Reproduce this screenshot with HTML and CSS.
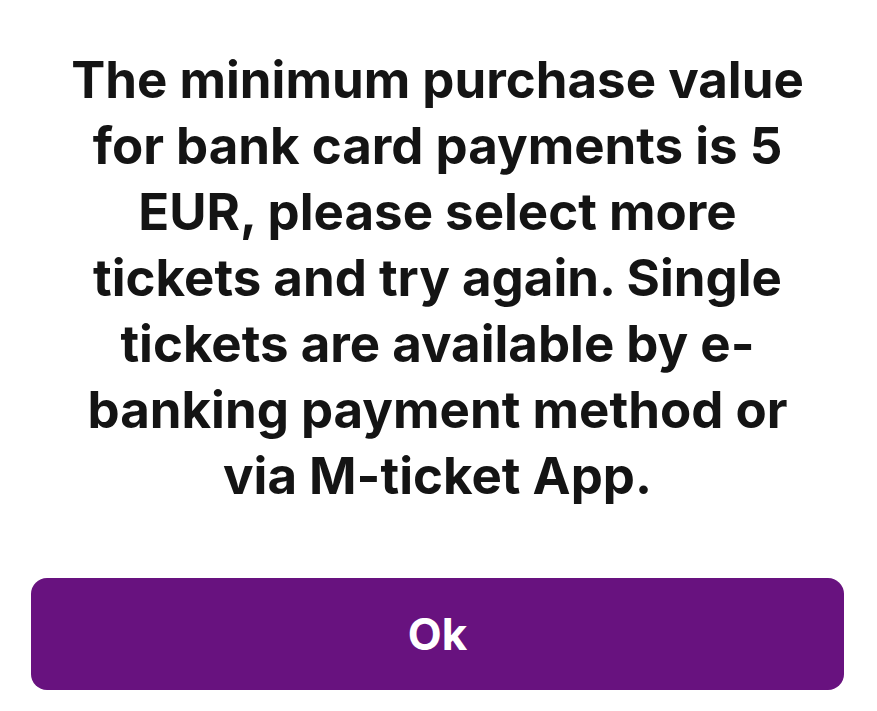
FILE: index.html
```html
<!DOCTYPE html>
<html>
<head>
<meta charset="utf-8">
<link rel="stylesheet" href="styles.css">
</head>
<body>
<div class="dialog">
  <p class="message">The minimum purchase value for bank card payments is 5 EUR, please select more tickets and try again. Single tickets are available by e-banking payment method or via M-ticket App.</p>
  <button class="ok-btn">Ok</button>
</div>
</body>
</html>
```
FILE: styles.css
```css
html, body {
  margin: 0;
  padding: 0;
  background: #ffffff;
}
.dialog {
  width: 877px;
  height: 711px;
  box-sizing: border-box;
  padding: 47px 33px 21px 31px;
  display: flex;
  flex-direction: column;
}
.message {
  margin: 0 auto;
  width: 750px;
  font-family: "Inter", "Roboto", sans-serif;
  font-weight: 700;
  font-size: 51px;
  line-height: 66px;
  color: #141414;
  text-align: center;
}
.ok-btn {
  margin-top: 69px;
  height: 112px;
  border: none;
  border-radius: 16px;
  background: #68127f;
  color: #ffffff;
  font-family: "Inter", "Roboto", sans-serif;
  font-weight: 700;
  font-size: 44px;
  cursor: pointer;
}
```
